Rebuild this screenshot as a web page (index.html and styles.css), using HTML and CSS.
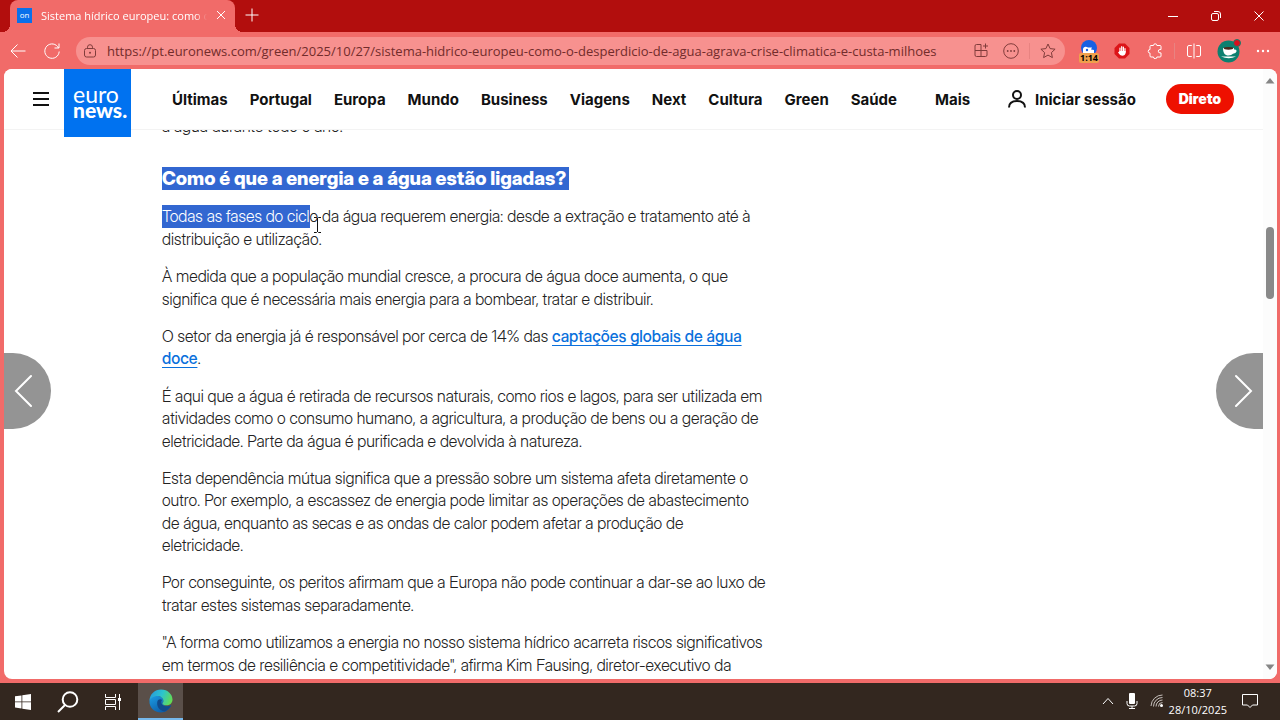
FILE: index.html
```
<!DOCTYPE html>
<html lang="pt">

<head>
  <meta charset="UTF-8">
  <meta name="viewport" content="width=device-width, initial-scale=1.0">
  <title>Sistema hídrico europeu</title>
  <link rel="stylesheet" href="styles.css">
</head>

<body>
  <div class="titlebar">
    <div class="tab">
      <span class="favicon">on</span>
      <span class="tab-title">Sistema hídrico europeu: como o</span>
      <button class="tab-close" aria-label="Fechar separador">
        <svg width="10" height="10" viewBox="0 0 10 10"><path d="M1 1l8 8M9 1l-8 8" /></svg>
      </button>
    </div>
    <button class="new-tab" aria-label="Novo separador">
      <svg width="14" height="14" viewBox="0 0 14 14"><path d="M7 .5v13M.5 7h13" /></svg>
    </button>
    <div class="window-buttons">
      <button aria-label="Minimizar"><svg width="10" height="10" viewBox="0 0 10 10"><path d="M0 5.500h10" /></svg></button>
      <button aria-label="Restaurar"><svg width="10" height="10" viewBox="0 0 10 10"><rect x=".5" y="2.500" width="7" height="7" rx="1.500" /><path d="M3 .5h4a2.500 2.500 0 0 1 2.500 2.500v4" /></svg></button>
      <button aria-label="Fechar"><svg width="10" height="10" viewBox="0 0 10 10"><path d="M.5 .5l9 9M9.500 .5l-9 9" /></svg></button>
    </div>
  </div>

  <div class="toolbar">
    <button class="tool" aria-label="Voltar">
      <svg width="16" height="16" viewBox="0 0 16 16"><path d="M15.500 8H1M7.500 1.500L1 8l6.500 6.500" /></svg>
    </button>
    <button class="tool reload" aria-label="Atualizar">
      <svg width="16" height="16" viewBox="0 0 16 16"><path d="M14.500 5A7.200 7.200 0 1 0 15.200 8.500M15 .5V5h-4.500" /></svg>
    </button>
    <div class="address">
      <svg width="14" height="14" viewBox="0 0 14 14"><rect x="1.500" y="4.500" width="11" height="8.500" rx="2" /><path d="M4.500 4.500V3.200a2.500 2.500 0 0 1 5 0v1.300" /><circle class="dot" cx="7" cy="8.700" r="1" /></svg>
      <input type="text" aria-label="Endereço" value="https://pt.euronews.com/green/2025/10/27/sistema-hidrico-europeu-como-o-desperdicio-de-agua-agrava-crise-climatica-e-custa-milhoes">
      <button aria-label="Aplicações">
        <svg width="15" height="15" viewBox="0 0 15 15"><path d="M7 1.500H2.500a1.500 1.500 0 0 0-1.500 1.500v9a1.500 1.500 0 0 0 1.500 1.500h9a1.500 1.500 0 0 0 1.500-1.500V7.500H1M7 1.500v12M11.500 .5v5M9 3h5" /></svg>
      </button>
      <button aria-label="Mais opções">
        <svg width="16" height="16" viewBox="0 0 16 16"><circle cx="8" cy="8" r="7.300" /><circle class="dot" cx="4.700" cy="8" r=".9" /><circle class="dot" cx="8" cy="8" r=".9" /><circle class="dot" cx="11.300" cy="8" r=".9" /></svg>
      </button>
      <span class="divider"></span>
      <button aria-label="Adicionar aos favoritos">
        <svg width="16" height="16" viewBox="0 0 16 16"><path d="M8 1l2.100 4.600 5 .6-3.700 3.400 1 5L8 12.100l-4.400 2.500 1-5L.9 6.200l5-.6z" /></svg>
      </button>
    </div>
    <div class="extensions">
      <button class="timer" aria-label="Temporizador">
        <svg width="18" height="18" viewBox="0 0 18 18"><circle class="blue" cx="9" cy="9" r="8" /><path class="white" d="M3 14v-3.500c0-3 3-3.500 5-2h4l-1 2 3 .5v3z" /><circle class="blue" cx="7" cy="11" r="1.200" /></svg>
        <span>1:14</span>
      </button>
      <button aria-label="Bloqueador">
        <svg width="16" height="16" viewBox="0 0 16 16"><path class="red" d="M5 .5h6L15.500 5v6L11 15.500H5L.5 11V5z" /><path class="hand" d="M6 9V5M7.700 8V3.700M9.400 8V4M11 9V5.500" /><path class="white" d="M5.300 8h6.400v1.800q-.5 3-3.500 3-2.200 0-4.200-3.300l.8-.8.500.5z" /></svg>
      </button>
      <button class="puzzle" aria-label="Extensões">
        <svg width="16" height="16" viewBox="0 0 16 16"><path d="M4 2.500h2.500a1.700 1.700 0 0 1 3.400 0H13a1 1 0 0 1 1 1v3h-1a1.700 1.700 0 0 0 0 3.400h1V13a1 1 0 0 1-1 1H9.900a1.700 1.700 0 0 1-3.400 0H4a1 1 0 0 1-1-1v-2.900a1.800 1.800 0 0 1 0-3.600v-3a1 1 0 0 1 1-1z" /></svg>
      </button>
      <span class="divider"></span>
      <button aria-label="Ecrã dividido">
        <svg width="16" height="16" viewBox="0 0 16 16"><path d="M8 .5v15M5.800 2.500H3A1.500 1.500 0 0 0 1.500 4v8A1.500 1.500 0 0 0 3 13.500h2.800M10.200 2.500H13A1.500 1.500 0 0 1 14.500 4v8a1.500 1.500 0 0 1-1.500 1.500h-2.800" /></svg>
      </button>
      <button aria-label="Perfil">
        <svg width="24" height="24" viewBox="0 0 24 24"><circle class="teal" cx="11.500" cy="12.500" r="11" /><path class="white" d="M6 9h11v1.500q3-.5 2.500 2-.5 2-3.500 2.300-1.500 1.700-4.500 1.700C8 16.500 6 14 6 9zM4 17.500h15q-7 3.500-15 0z" /><ellipse class="coffee" cx="11.500" cy="9.300" rx="4.800" ry="1.400" /><circle class="alert" cx="20" cy="4" r="3.500" /></svg>
      </button>
      <button aria-label="Definições">
        <svg width="14" height="4" viewBox="0 0 14 4"><circle class="white" cx="2" cy="2" r="1.200" /><circle class="white" cx="7" cy="2" r="1.200" /><circle class="white" cx="12" cy="2" r="1.200" /></svg>
      </button>
    </div>
  </div>

  <div class="viewport">
    <div class="page">
      <header class="site-header">
        <button class="menu" aria-label="Menu">
          <svg width="16" height="14" viewBox="0 0 16 14"><path d="M0 1h16M0 7h16M0 13h16" /></svg>
        </button>
        <a class="logo" href="#"><span>euro</span><b>news.</b></a>
        <nav>
          <a href="#">Últimas</a>
          <a href="#">Portugal</a>
          <a href="#">Europa</a>
          <a href="#">Mundo</a>
          <a href="#">Business</a>
          <a href="#">Viagens</a>
          <a href="#">Next</a>
          <a href="#">Cultura</a>
          <a href="#">Green</a>
          <a href="#">Saúde</a>
        </nav>
        <a class="more" href="#">Mais</a>
        <a class="login" href="#">
          <svg width="18" height="18" viewBox="0 0 18 18"><circle cx="9" cy="5" r="4" /><path d="M1 17.500c0-4.500 3.500-6.500 8-6.500s8 2 8 6.500" /></svg>
          Iniciar sessão
        </a>
        <a class="live" href="#">Direto</a>
      </header>

      <article>
        <p>a água durante todo o ano.</p>
        <h2><span class="selected">Como é que a energia e a água estão ligadas?</span></h2>
        <p><span class="selected">Todas as fases do cicl</span>o da água requerem energia: desde a extração e tratamento até à distribuição e utilização.</p>
        <p>À medida que a população mundial cresce, a procura de água doce aumenta, o que significa que é necessária mais energia para a bombear, tratar e distribuir.</p>
        <p>O setor da energia já é responsável por cerca de 14% das <a href="#">captações globais de água doce</a>.</p>
        <p>É aqui que a água é retirada de recursos naturais, como rios e lagos, para ser utilizada em atividades como o consumo humano, a agricultura, a produção de bens ou a geração de eletricidade. Parte da água é purificada e devolvida à natureza.</p>
        <p>Esta dependência mútua significa que a pressão sobre um sistema afeta diretamente o outro. Por exemplo, a escassez de energia pode limitar as operações de abastecimento de água, enquanto as secas e as ondas de calor podem afetar a produção de eletricidade.</p>
        <p>Por conseguinte, os peritos afirmam que a Europa não pode continuar a dar-se ao luxo de tratar estes sistemas separadamente.</p>
        <p>"A forma como utilizamos a energia no nosso sistema hídrico acarreta riscos significativos em termos de resiliência e competitividade", afirma Kim Fausing, diretor-executivo da</p>
      </article>

      <button class="arrow prev" aria-label="Artigo anterior">
        <svg width="18" height="34" viewBox="0 0 18 34"><path d="M17 2L2 17l15 15" /></svg>
      </button>
      <button class="arrow next" aria-label="Artigo seguinte">
        <svg width="18" height="34" viewBox="0 0 18 34"><path d="M1 2l15 15L1 32" /></svg>
      </button>
      <svg class="cursor" width="7" height="16" viewBox="0 0 7 16"><path d="M0 .5h2.500l1 1 1-1H7M3.500 1v14M0 15.500h2.500l1-1 1 1H7" /></svg>
    </div>
    <div class="scrollbar">
      <svg width="10" height="6" viewBox="0 0 10 6"><path d="M5 0l4.500 5.500h-9z" /></svg>
      <div class="track"><div class="thumb"></div></div>
      <svg width="10" height="6" viewBox="0 0 10 6"><path d="M5 6L.5 .5h9z" /></svg>
    </div>
  </div>

  <div class="taskbar">
    <button aria-label="Iniciar">
      <svg width="16" height="16" viewBox="0 0 16 16"><path class="white" d="M0 2.300l6.500-.9v6.100H0zM7.300 1.300L16 0v7.500H7.300zM0 8.300h6.500v6.200L0 13.600zM7.300 8.300H16V16l-8.700-1.300z" /></svg>
    </button>
    <button aria-label="Procurar">
      <svg width="22" height="22" viewBox="0 0 22 22"><g class="lens"><circle cx="13" cy="8.500" r="7.300" /><path d="M8 14l-7 7" /></g></svg>
    </button>
    <button aria-label="Vista de tarefas">
      <svg width="16" height="16" viewBox="0 0 16 16"><path d="M.5 0v3.500h10V0M.5 16v-3.500h10V16M.5 5.500h10v5H.5zM14.500 0v16" /><path class="white" d="M13 4h3v3h-3z" /></svg>
    </button>
    <button class="active" aria-label="Microsoft Edge">
      <svg class="edge" width="24" height="24" viewBox="0 0 24 24">
        <defs>
          <linearGradient id="top" x1="0" y1=".3" x2="1" y2=".6"><stop offset="0" stop-color="#279bdc" /><stop offset=".5" stop-color="#2cc4cd" /><stop offset="1" stop-color="#64dc50" /></linearGradient>
          <linearGradient id="side" x1="0" y1="0" x2=".7" y2="1"><stop offset="0" stop-color="#1c9de4" /><stop offset="1" stop-color="#0c59a4" /></linearGradient>
        </defs>
        <path fill="url(#side)" d="M.5 12C1 8 5 6 9 7c4 .5 6 3 5.500 5.500-1 1-1.500 2 0 3.500 2 1.500 5 1.500 7.800.3C20 21 16.500 23.500 12 23.500 5 23.500 0 18 .5 12z" />
        <path fill="#114a8b" d="M8.500 12c-1.500 5 2 10 7 10.500 2.800-1 5.500-3.300 6.800-6.200-3.500 1.800-10 1.200-10-3.300 0-1.500 1-2 1-2-2-1.500-4-.7-4.800 1z" />
        <path fill="url(#top)" d="M.5 12C.5 5 6 .5 12 .5c7 0 11.500 5 11.500 10 0 4-3 5.800-6 5.800-2.500 0-4-.8-4-1.800 0-.6 1-1 1-2.500C14.500 9 11.500 7 8.500 7S1.500 8.500.5 12z" />
      </svg>
    </button>
    <div class="tray">
      <svg width="12" height="8" viewBox="0 0 12 8"><path d="M1 7l5-5.500L11 7" /></svg>
      <svg width="12" height="16" viewBox="0 0 12 16"><rect class="white" x="3" y="0" width="6" height="11" rx="1" /><path d="M1 8v2.500Q1 13 3.500 13h5q2.500 0 2.500-2.500V8M6 13v2.500M3 15.500h6" /></svg>
      <svg width="13" height="13" viewBox="0 0 13 13"><path class="faded" d="M1 12A11.500 11.500 0 0 1 12.500 1M3.500 12.500a9 9 0 0 1 9-9M6 12.500A6.500 6.500 0 0 1 12.500 6M8.500 12.500a4 4 0 0 1 4-4" /><circle class="white" cx="11.500" cy="11.500" r="1.500" /></svg>
      <div class="clock"><span>08:37</span><span>28/10/2025</span></div>
      <svg width="16" height="16" viewBox="0 0 16 16"><path d="M.5 1.500h15v10.500h-5L8 14.500 5.500 12h-5z" /></svg>
    </div>
  </div>
</body>

</html>
```

FILE: styles.css
```
* {
  box-sizing: border-box;
}

body {
  display: flex;
  flex-direction: column;
  height: 100vh;
  margin: 0;
  overflow: hidden;
  background-color: #f16b69;
  font-family: Inter, "Liberation Sans", sans-serif;
}

a {
  color: inherit;
  text-decoration: none;
}

button {
  display: flex;
  align-items: center;
  justify-content: center;
  padding: 0;
  border: none;
  background: none;
  color: inherit;
}

svg {
  flex: none;
  fill: none;
  stroke: currentColor;
}

.white {
  fill: #fff;
  stroke: none;
}

.dot {
  fill: currentColor;
  stroke: none;
}

/* Barra de título */
.titlebar {
  display: flex;
  height: 32px;
  padding-left: 10px;
  background-color: #b20e0d;
  color: #fff;
}

.tab {
  display: flex;
  align-items: center;
  gap: 9px;
  position: relative;
  width: 225px;
  padding: 0 9px 2px 7px;
  border-radius: 8px 8px 0 0;
  background-color: #f16b69;
  font: 11px "Open Sans", sans-serif;
}

/* Cantos curvos na base do separador */
.tab::before,
.tab::after {
  content: "";
  position: absolute;
  bottom: 0;
  width: 8px;
  height: 8px;
}

.tab::before {
  right: 100%;
  background: radial-gradient(circle at 0 0, transparent 8px, #f16b69 8px);
}

.tab::after {
  left: 100%;
  background: radial-gradient(circle at 100% 0, transparent 8px, #f16b69 8px);
}

.favicon {
  width: 15px;
  height: 15px;
  background-color: #0a70ea;
  font-size: 8px;
  line-height: 14px;
  text-align: center;
}

.tab-title {
  flex: 1;
  overflow: hidden;
  white-space: nowrap;
  -webkit-mask-image: linear-gradient(to left, transparent, #000 12px);
  mask-image: linear-gradient(to left, transparent, #000 12px);
}

.tab-close {
  width: 10px;
}

.new-tab {
  width: 34px;
  padding-bottom: 2px;
}

.window-buttons {
  display: flex;
  margin-left: auto;
}

.window-buttons button {
  width: 43px;
}

/* Barra de ferramentas */
.toolbar {
  display: flex;
  align-items: center;
  height: 37px;
  padding: 0 10px;
  color: #fff;
}

.tool {
  width: 16px;
  margin-right: 18px;
}

.reload {
  margin-right: 16px;
}

.address {
  display: flex;
  flex: 1;
  align-items: center;
  gap: 14px;
  height: 28px;
  padding: 0 9px 0 7px;
  border-radius: 14px;
  background-color: #f7918f;
  color: #803c3b;
}

.address input {
  flex: 1;
  min-width: 0;
  margin-left: -4px;
  padding: 0;
  border: none;
  background: none;
  color: #722c2b;
  font: 13px "Open Sans", sans-serif;
}

.divider {
  width: 1px;
  height: 16px;
  margin: 0 -4px;
  background-color: #e88381;
}

.extensions {
  display: flex;
  align-items: center;
  gap: 15px;
  padding-left: 14px;
}

.timer {
  position: relative;
  width: 20px;
  height: 24px;
  align-items: flex-start;
}

.timer span {
  position: absolute;
  bottom: 0;
  left: 0;
  width: 20px;
  border-radius: 2px;
  background-color: #efa04c;
  color: #000;
  font: bold 9px/10px "Noto Sans", sans-serif;
}

.puzzle {
  padding-left: 2px;
}

.blue {
  fill: #1760e2;
  stroke: none;
}

.red {
  fill: #dc1418;
  stroke: none;
}

.hand {
  stroke-width: 1.2;
  stroke-linecap: round;
}

.teal {
  fill: #0c806f;
  stroke: none;
}

.coffee {
  fill: #4a2b1c;
  stroke: none;
}

.alert {
  fill: #d90f1d;
  stroke: #0c806f;
}

/* Página */
.viewport {
  display: flex;
  flex: 1;
  min-height: 0;
  margin: 0 3px 4px 4px;
  overflow: hidden;
  border-radius: 8px;
  background-color: #fff;
}

.page {
  position: relative;
  flex: 1;
  overflow: hidden;
  color: #222;
}

.site-header {
  display: flex;
  align-items: center;
  position: relative;
  z-index: 1;
  height: 61px;
  padding: 0 29px;
  border-bottom: 1px solid #f3f3f3;
  background-color: #fff;
  color: #111;
  font-size: 15px;
  font-weight: 700;
}

.menu {
  margin-right: 15px;
}

.menu svg,
.login svg {
  stroke-width: 2;
}

.logo {
  align-self: flex-start;
  width: 67px;
  height: 68px;
  padding: 17px 0 0 9px;
  background-color: #0072f0;
  color: #fff;
  font: 23px/16px Lato, sans-serif;
}

.logo span,
.logo b {
  display: block;
}

.logo b {
  font-size: 21px;
  font-weight: 900;
}

nav {
  display: flex;
  gap: 22px;
  margin-left: 41px;
}

.more {
  margin-left: 38px;
}

.login {
  display: flex;
  align-items: center;
  gap: 9px;
  margin-left: auto;
}

.live {
  margin-left: 30px;
  padding: 0 13px;
  border-radius: 15px;
  background-color: #ee1000;
  color: #fff;
  font-family: "Inter Display", Inter, sans-serif;
  font-size: 14px;
  font-weight: 900;
  line-height: 30px;
}

/* O início do artigo passa por baixo do cabeçalho */
article {
  max-width: 605px;
  margin: -15px 0 0 158px;
  font-family: "Inter Display", Inter, sans-serif;
  font-size: 16px;
  font-weight: 300;
  line-height: 1.4;
}

article p {
  margin: 0 0 15px;
}

article h2 {
  margin: 30px 0 15px;
  font-size: 19px;
  font-weight: 800;
  line-height: 23px;
}

article a {
  color: #0a70dc;
  font-weight: 500;
  text-decoration: underline;
  text-underline-offset: 3px;
}

.selected {
  display: inline-block;
  background-color: #3267d1;
  color: #fff;
}

h2 .selected {
  padding-right: 3px;
}

.arrow {
  position: absolute;
  top: 284px;
  width: 47px;
  height: 76px;
  background-color: #949494;
  color: #fff;
}

.arrow svg {
  stroke-width: 2;
  stroke-linecap: round;
}

.prev {
  left: 0;
  padding-right: 9px;
  border-radius: 0 38px 38px 0;
}

.next {
  right: 0;
  padding-left: 9px;
  border-radius: 38px 0 0 38px;
}

.cursor {
  position: absolute;
  top: 148px;
  left: 310px;
  color: #111;
}

.scrollbar {
  display: flex;
  flex-direction: column;
  align-items: center;
  width: 14px;
  padding: 9px 0;
  background-color: #fcfcfc;
}

.scrollbar svg {
  fill: #858585;
  stroke: none;
}

.track {
  flex: 1;
  padding-top: 143px;
}

.thumb {
  width: 8px;
  height: 72px;
  border-radius: 4px;
  background-color: #898989;
}

/* Barra de tarefas */
.taskbar {
  display: flex;
  height: 37px;
  background-color: #33271f;
  color: #fff;
}

.taskbar button {
  width: 45px;
}

.taskbar .active {
  margin-left: 3px;
  border-bottom: 2px solid #76b9ed;
  background-color: #5a4f49;
}

.edge {
  stroke: none;
}

.lens {
  stroke-width: 2;
}

.tray {
  display: flex;
  align-items: center;
  gap: 12px;
  margin-left: auto;
  padding: 0 22px 2px 0;
}

.faded {
  stroke: #c5bfbb;
}

.clock {
  display: flex;
  flex-direction: column;
  margin: 0 3px 0 -6px;
  font: 11px/17px "Open Sans", sans-serif;
  text-align: center;
}
```
